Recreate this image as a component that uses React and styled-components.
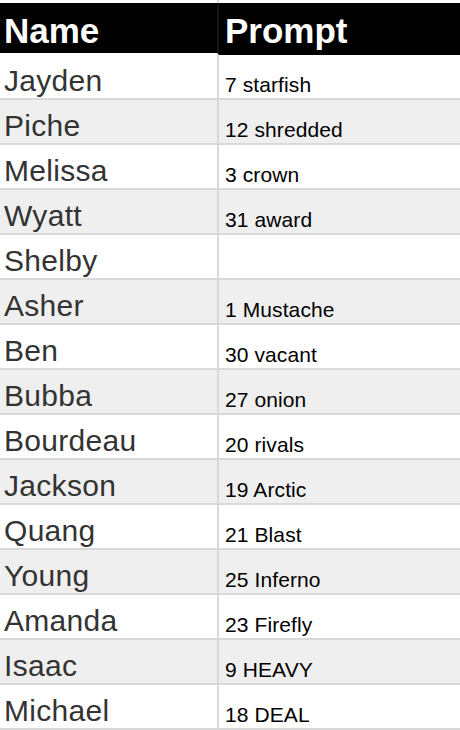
import React, {Component} from 'react';
import styled, {createGlobalStyle} from 'styled-components';

const GlobalStyle = createGlobalStyle`
    html, body {
        margin : 0;
        padding : 0;
        background-color : #fff;
        overflow : hidden;
    }
`;

const Sheet = styled.div`
    display : grid;
    grid-template-columns : 219px 1fr;
    width : 460px;
    font-family : 'Liberation Sans', Arial, sans-serif;
`;

const TopGap = styled.div`
    height : 3px;
    box-sizing : border-box;
    border-right : ${props => props.left ? '2px solid #d9d9d9' : 'none'};
`;

const HeadCell = styled.div`
    height : 52px;
    box-sizing : border-box;
    background-color : #000;
    color : #fff;
    font-size : 35px;
    font-weight : 700;
    line-height : 40px;
    padding : 8px 0 0 ${props => props.left ? '4px' : '6px'};
    border-right : ${props => props.left ? '2px solid #141414' : 'none'};
    border-bottom : ${props => props.left ? '2px solid #fff' : 'none'};
    white-space : nowrap;
`;

const NameCell = styled.div`
    height : 45px;
    box-sizing : border-box;
    padding : 9px 0 0 4px;
    font-size : 30px;
    line-height : 34px;
    letter-spacing : 0.3px;
    color : #333;
    background-color : ${props => props.shaded ? '#efefef' : '#fff'};
    border-right : 2px solid #d9d9d9;
    border-bottom : 2px solid #d9d9d9;
    white-space : nowrap;
`;

const PromptCell = styled.div`
    height : 45px;
    box-sizing : border-box;
    padding : 18px 0 0 6px;
    font-size : 21px;
    line-height : 24px;
    letter-spacing : 0.1px;
    color : #000;
    background-color : ${props => props.shaded ? '#efefef' : '#fff'};
    border-bottom : 2px solid #d9d9d9;
    white-space : nowrap;
`;

const rows = [
    {name : 'Jayden', prompt : '7 starfish'},
    {name : 'Piche', prompt : '12 shredded'},
    {name : 'Melissa', prompt : '3 crown'},
    {name : 'Wyatt', prompt : '31 award'},
    {name : 'Shelby', prompt : ''},
    {name : 'Asher', prompt : '1 Mustache'},
    {name : 'Ben', prompt : '30 vacant'},
    {name : 'Bubba', prompt : '27 onion'},
    {name : 'Bourdeau', prompt : '20 rivals'},
    {name : 'Jackson', prompt : '19 Arctic'},
    {name : 'Quang', prompt : '21 Blast'},
    {name : 'Young', prompt : '25 Inferno'},
    {name : 'Amanda', prompt : '23 Firefly'},
    {name : 'Isaac', prompt : '9 HEAVY'},
    {name : 'Michael', prompt : '18 DEAL'},
];

class App extends Component {
    render() {
        return (
            <Sheet>
                <GlobalStyle/>
                <TopGap left/>
                <TopGap/>
                <HeadCell left>Name</HeadCell>
                <HeadCell>Prompt</HeadCell>
                {rows.map((row, i) =>
                    <React.Fragment key={"row" + row.name}>
                        <NameCell shaded={i % 2 === 1}>{row.name}</NameCell>
                        <PromptCell shaded={i % 2 === 1}>{row.prompt}</PromptCell>
                    </React.Fragment>
                )}
            </Sheet>
        );
    }
}

export default App;
